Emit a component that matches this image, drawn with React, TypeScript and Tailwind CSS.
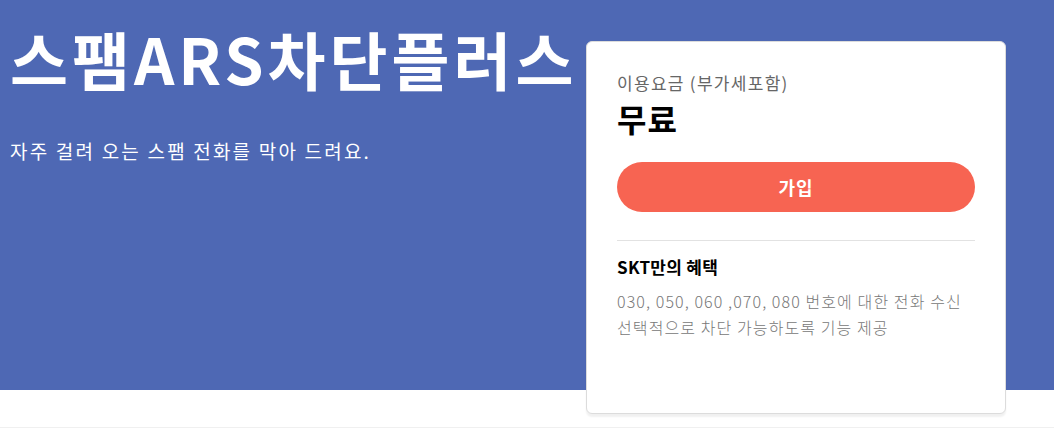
import React from 'react';

const FONT = "font-['Noto_Sans_CJK_KR','Noto_Sans',sans-serif]";

export default function App() {
  return (
    <div className={`${FONT} bg-white min-h-[429px]`}>
      {/* Hero */}
      <section className="h-[390px] bg-[#4e68b4]">
        <div className="flex items-start justify-between pl-[10px] pr-[48px]">
          <div className="pt-[26px] text-white">
            <h1 className="text-[63px] font-bold leading-none tracking-[4px]">스팸ARS차단플러스</h1>
            <p className="mt-[52px] text-[19px] leading-none tracking-[2.2px]">자주 걸려 오는 스팸 전화를 막아 드려요.</p>
          </div>

          {/* Price card */}
          <div className="mt-[41px] w-[420px] h-[373px] bg-white rounded-[6px] border border-[#dcdcdc] shadow-[0_3px_2px_rgba(0,0,0,0.06)] px-[30px] pt-[28px]">
            <p className="text-[17px] leading-[25px] text-[#666] tracking-[1.3px]">이용요금 (부가세포함)</p>
            <p className="text-[32px] font-bold leading-[47px] text-black tracking-[1px]">무료</p>
            <button className="mt-[20px] w-full h-[50px] rounded-full bg-[#f76452] text-white text-[18px] font-bold tracking-[1px]">
              가입
            </button>
            <div className="mt-[28px] border-t border-[#e2e2e2] pt-[14px]">
              <p className="text-[17px] font-bold leading-[24px] text-black tracking-[0.3px]">SKT만의 혜택</p>
              <p className="mt-[9px] text-[16px] font-light leading-[26px] text-[#777] tracking-[1.1px]">
                030, 050, 060 ,070, 080 번호에 대한 전화 수신
                <br />
                선택적으로 차단 가능하도록 기능 제공
              </p>
            </div>
          </div>
        </div>
      </section>
      <div className="mt-[37px] border-t border-[#f0f0f0]" />
    </div>
  );
}
